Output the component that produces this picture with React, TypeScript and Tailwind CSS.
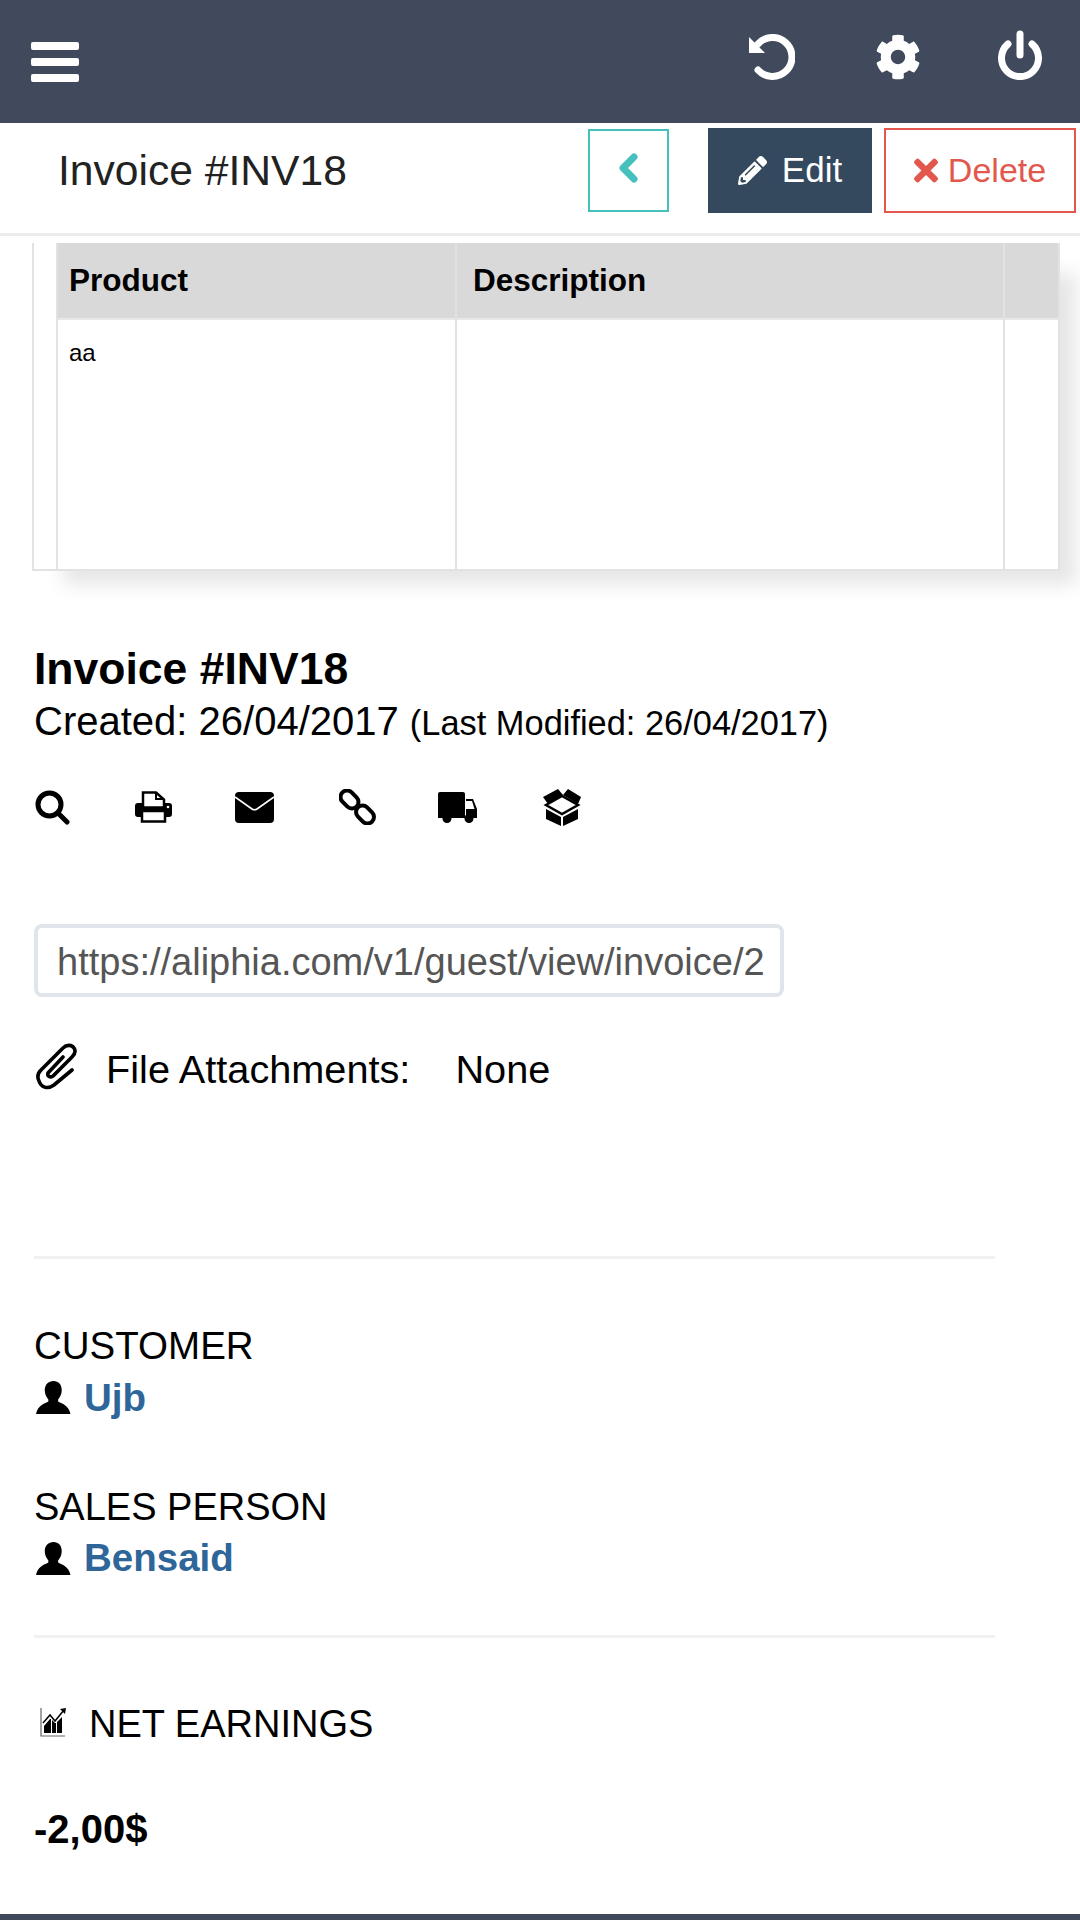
import { FaCog, FaPencilAlt, FaTimes } from 'react-icons/fa';

function UndoIcon() {
  return (
    <svg viewBox="0 0 46 46" className="w-[46px] h-[46px] mr-[80px]" fill="none">
      <path d="M8.500 10.500A19.500 19.500 0 1 1 9 36" stroke="#fff" strokeWidth="7" strokeLinecap="round" />
      <path d="M0 3v16h16z" fill="#fff" />
    </svg>
  );
}

function PowerIcon() {
  return (
    <svg viewBox="0 0 46 50" className="w-[46px] h-[50px] mb-[4px]" fill="none" stroke="#fff" strokeWidth="7" strokeLinecap="round">
      <path d="M23 4v21" />
      <path d="M11 14A18.500 18.500 0 1 0 35 14" />
    </svg>
  );
}

function SearchIcon() {
  return (
    <svg viewBox="0 0 35 35" className="w-[35px] h-[35px] ml-[1px] mr-[65px]" fill="none" stroke="#000" strokeWidth="5" strokeLinecap="round">
      <circle cx="14.500" cy="14.500" r="11.500" />
      <path d="M23 23l9 9" />
    </svg>
  );
}

function PrintIcon() {
  return (
    <svg viewBox="0 0 37 32" className="w-[37px] h-[32px] mr-[63px]">
      <rect x="0" y="12" width="37" height="14" rx="3" fill="#000" />
      <path d="M8 1.500h13l8 7v8H8z" fill="#fff" stroke="#000" strokeWidth="2.500" />
      <path d="M21 2v6h7" fill="none" stroke="#000" strokeWidth="2" />
      <rect x="7" y="20" width="23" height="10.500" fill="#fff" stroke="#000" strokeWidth="2.500" />
      <circle cx="33" cy="16" r="1.300" fill="#fff" />
    </svg>
  );
}

function MailIcon() {
  return (
    <svg viewBox="0 0 39 31" className="w-[39px] h-[31px] mr-[65px]">
      <rect width="39" height="31" rx="4" fill="#000" />
      <path d="M0 5 17 17Q19.500 18.500 22 17L39 5" fill="none" stroke="#fff" strokeWidth="1.600" />
    </svg>
  );
}

function LinkIcon() {
  return (
    <svg viewBox="18 8 38 36" className="w-[38px] h-[36px] mr-[61px]" fill="none" stroke="#000" strokeWidth="4">
      <rect x="18.500" y="12" width="20" height="13" rx="6.500" transform="rotate(45 28.500 18.500)" />
      <rect x="34" y="27" width="20" height="13" rx="6.500" transform="rotate(45 44 33.500)" />
    </svg>
  );
}

function TruckIcon() {
  return (
    <svg viewBox="119 12 40 32" className="w-[40px] h-[32px] mr-[62px]">
      <path d="M121 13h23a2 2 0 0 1 2 2v24H119V15a2 2 0 0 1 2-2z" fill="#000" />
      <path d="M147 20h7l4 10v9h-11z" fill="#000" />
      <path d="M147 22h6l2.500 8H147z" fill="#fff" />
      <circle cx="128" cy="39.500" r="4.500" fill="#000" />
      <circle cx="150" cy="39.500" r="4.500" fill="#000" />
    </svg>
  );
}

function BoxIcon() {
  return (
    <svg viewBox="222 8 40 39" className="w-[40px] h-[39px] ml-[2px]">
      <path d="M223 17 238 9l5 6-15 9zM261 17 248 9l-5 6 15 9z" fill="#000" />
      <path d="M226 25l16-9 16 9-16 9z" fill="none" stroke="#000" strokeWidth="2.500" />
      <path d="M226 29l15 8v9l-15-7zM258 29l-15 8v9l15-7z" fill="#000" />
    </svg>
  );
}

function ClipIcon() {
  return (
    <svg viewBox="15 10 44 49" className="w-[44px] h-[49px] mr-[27px] -mt-[10px]" fill="none" stroke="#000" strokeWidth="3.600" strokeLinecap="round">
      <path d="M52 39 34 54C27 59 21 56 19 50 17 46 18 42 21 39L43 17C47 13 52 14 54 17 56 20 55 23 52 26L33 45C30 47 27 45 28 42L43 26" />
    </svg>
  );
}

function UserIcon() {
  return (
    <svg viewBox="0 0 34 32" className="w-[35px] h-[33px] ml-[2px]" fill="currentColor">
      <path d="M17 0c5 0 8 3.500 8 9 0 4-2 7-3.500 9v2c3 2 10 3 12 12H0c2-9 9-10 12-12v-2c-1.500-2-3.500-5-3.500-9C8.500 3.500 12 0 17 0z" />
    </svg>
  );
}

function ChartIcon() {
  return (
    <svg viewBox="14 5 28 32" className="w-[28px] h-[32px] ml-[5px] mr-[22px] -mt-[4px]">
      <path d="M16 7v28h24" fill="none" stroke="#666" strokeWidth="1.200" />
      <path d="M19 32v-7l6-7 1 0v14zM27 32V19l3 3 1 0v10zM32 32V21l5-5v16z" fill="#000" />
      <path d="M18 22l7-8 5 6 9-11" fill="none" stroke="#000" strokeWidth="1.500" />
      <path d="M35 8l6-1-1 6z" fill="#000" />
    </svg>
  );
}

export default function App() {
  return (
    <div className="w-[1080px] h-[1920px] bg-white flex flex-col overflow-hidden font-['Liberation_Sans',Arial,sans-serif] text-black">
      <header className="h-[123px] bg-[#414a5c] flex items-center justify-between pl-[31px] pr-[37px] text-white shrink-0">
        <div className="flex flex-col gap-[8px] w-[48px]">
          <div className="h-[8px] rounded-[2px] bg-white" />
          <div className="h-[8px] rounded-[2px] bg-white" />
          <div className="h-[8px] rounded-[2px] bg-white" />
        </div>
        <div className="flex items-center pb-[9px]">
          <UndoIcon />
          <FaCog className="w-[46px] h-[46px] mr-[76px]" />
          <PowerIcon />
        </div>
      </header>

      <div className="h-[113px] shrink-0 border-b-[3px] border-[#ebebeb] flex items-center pl-[58px] pr-[4px] pb-[15px]">
        <h1 className="text-[42.600px] text-[#222] flex-1">Invoice #INV18</h1>
        <button className="w-[81px] h-[83px] border-2 border-[#45c0bc] flex items-center justify-center mr-[39px]">
          <svg viewBox="0 0 21 30" className="w-[21px] h-[30px] -mt-[6px]" fill="none" stroke="#45c0bc" strokeWidth="7" strokeLinecap="round" strokeLinejoin="round">
            <path d="M16 4 5 15l11 11" />
          </svg>
        </button>
        <button className="w-[164px] h-[85px] bg-[#34495e] text-white text-[35px] flex items-center justify-center gap-[15px] mr-[12px]">
          <FaPencilAlt className="w-[29px] h-[29px]" />
          Edit
        </button>
        <button className="w-[192px] h-[85px] border-2 border-[#e2584d] text-[#e2584d] text-[34px] flex items-center justify-center gap-[10px]">
          <FaTimes className="w-[24px] h-[35px]" />
          Delete
        </button>
      </div>

      <div className="ml-[32px] mr-[20px] mt-[7px] h-[328px] shrink-0 pl-[22px] border-l-2 border-b-2 border-r-2 border-[#e2e2e2] shadow-[24px_22px_18px_-8px_rgba(0,0,0,0.1)] flex">
        <div className="w-[399px] border-l-2 border-[#e2e2e2]">
          <div className="h-[77px] bg-[#d9d9d9] border-b-2 border-[#e8e8e8] flex items-center pl-[11px] text-[31.500px] font-bold">Product</div>
          <div className="pl-[11px] pt-[15px] text-[24px]">aa</div>
        </div>
        <div className="w-[548px] border-l-2 border-[#e2e2e2]">
          <div className="h-[77px] bg-[#d9d9d9] border-b-2 border-[#e8e8e8] flex items-center pl-[16px] text-[31.500px] font-bold">Description</div>
        </div>
        <div className="flex-1 border-l-2 border-[#e2e2e2]">
          <div className="h-[77px] bg-[#d9d9d9] border-b-2 border-[#e8e8e8]" />
        </div>
      </div>

      <div className="pl-[34px] flex flex-col">
        <h2 className="mt-[71px] text-[44.500px] font-bold leading-[54px]">Invoice #INV18</h2>
        <p className="text-[40px] leading-[50px]">
          Created: 26/04/2017 <span className="text-[34.400px]">(Last Modified: 26/04/2017)</span>
        </p>

        <div className="mt-[39px] flex items-center h-[40px]">
          <SearchIcon />
          <PrintIcon />
          <MailIcon />
          <LinkIcon />
          <TruckIcon />
          <BoxIcon />
        </div>

        <div className="mt-[97px] w-[750px] h-[73px] border-4 border-[#dfe5ea] rounded-[8px] flex items-center pl-[19px] pt-[4px] text-[38px] text-[#555] overflow-hidden whitespace-nowrap">
          https://aliphia.com/v1/guest/view/invoice/2
        </div>

        <div className="mt-[43px] flex items-center h-[60px] pl-[1px]">
          <ClipIcon />
          <span className="text-[39.700px] mr-[45px]">File Attachments:</span>
          <span className="text-[39.700px]">None</span>
        </div>

        <hr className="mt-[156px] w-[961px] border-t-[3px] border-[#f0f1f3]" />

        <div className="mt-[62px] text-[38.500px] leading-[50px]">CUSTOMER</div>
        <div className="flex items-center gap-[13px] h-[53px]">
          <UserIcon />
          <a className="text-[38.500px] font-bold text-[#2f6699]">Ujb</a>
        </div>

        <div className="mt-[58px] text-[38px] leading-[50px]">SALES PERSON</div>
        <div className="flex items-center gap-[13px] h-[52px]">
          <UserIcon />
          <a className="text-[38.500px] font-bold text-[#2f6699]">Bensaid</a>
        </div>

        <hr className="mt-[51px] w-[961px] border-t-[3px] border-[#f0f1f3]" />

        <div className="mt-[61px] flex items-center h-[50px]">
          <ChartIcon />
          <span className="text-[38px]">NET EARNINGS</span>
        </div>

        <div className="mt-[50px] text-[40px] font-bold">-2,00$</div>
      </div>

      <div className="mt-auto h-[6px] bg-[#414a5c] shrink-0" />
    </div>
  );
}
